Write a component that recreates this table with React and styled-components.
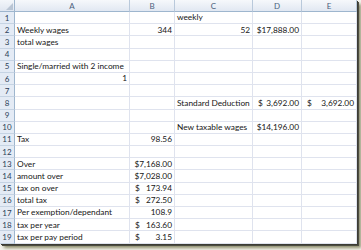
import styled, { createGlobalStyle } from "styled-components";

const GlobalStyle = createGlobalStyle`
  body {
    margin: 0;
    background: #f4f3ec;
    font-family: Lato, "Liberation Sans", sans-serif;
  }
`;

const COLS = ["A", "B", "C", "D", "E"];

const rows = {
  1: { C: { text: "weekly" } },
  2: {
    A: { text: "Weekly wages" },
    B: { text: "344", right: true },
    C: { text: "52", right: true },
    D: { text: "$17,888.00", right: true },
  },
  3: { A: { text: "total wages" } },
  5: { A: { text: "Single/married with 2 income" } },
  6: { A: { text: "1", right: true } },
  8: {
    C: { text: "Standard Deduction" },
    D: { money: "3,692.00" },
    E: { money: "3,692.00" },
  },
  10: {
    C: { text: "New taxable wages" },
    D: { text: "$14,196.00", right: true },
  },
  11: { A: { text: "Tax" }, B: { text: "98.56", right: true } },
  13: { A: { text: "Over" }, B: { text: "$7,168.00", right: true } },
  14: { A: { text: "amount over" }, B: { text: "$7,028.00", right: true } },
  15: { A: { text: "tax on over" }, B: { money: "173.94" } },
  16: { A: { text: "total tax" }, B: { money: "272.50" } },
  17: { A: { text: "Per exemption/dependant" }, B: { text: "108.9", right: true } },
  18: { A: { text: "tax per year" }, B: { money: "163.60" } },
  19: { A: { text: "tax per pay period" }, B: { money: "3.15" } },
};

const App = () => {
  const rowNums = Array.from({ length: 19 }, (_, i) => i + 1);
  return (
    <>
      <GlobalStyle />
      <Frame>
        <Sheet>
          <Corner>
            <CornerMark />
          </Corner>
          {COLS.map((c) => (
            <ColHeader key={c}>{c}</ColHeader>
          ))}
          {rowNums.map((n) => (
            <Row key={n} n={n} />
          ))}
        </Sheet>
      </Frame>
    </>
  );
};

const Row = ({ n }) => {
  const data = rows[n] || {};
  return (
    <>
      <RowHeader>{n}</RowHeader>
      {COLS.map((c) => {
        const cell = data[c];
        if (!cell) return <Cell key={c} />;
        if (cell.money)
          return (
            <Cell key={c} $money>
              <span>$</span>
              <span>{cell.money}</span>
            </Cell>
          );
        return (
          <Cell key={c} $right={cell.right}>
            {cell.text}
          </Cell>
        );
      })}
    </>
  );
};

export default App;

const Frame = styled.div`
  width: 361px;
  height: 250px;
  overflow: hidden;
`;

const Sheet = styled.div`
  display: grid;
  grid-template-columns: 15px 115px 45px 78px 49px 55px;
  grid-template-rows: 12px repeat(19, 12.2px);
  width: 357px;
  height: 244px;
  background: #fff;
  box-shadow: 1px 1px 0 #3c3c34, 2px 2px 0 #4d4d42, 4px 4px 3px #8d8d6c;
  font-size: 8.3px;
  color: #161616;
`;

const Corner = styled.div`
  position: relative;
  background: linear-gradient(#f3f6fa, #dfe6f0);
  border-right: 1px solid #9eb6ce;
  border-bottom: 1px solid #9eb6ce;
`;

const CornerMark = styled.div`
  position: absolute;
  right: 1px;
  bottom: 1px;
  width: 0;
  height: 0;
  border-left: 7px solid transparent;
  border-bottom: 7px solid #b9c5d4;
`;

const ColHeader = styled.div`
  display: flex;
  align-items: center;
  justify-content: center;
  background: linear-gradient(#f6f8fb, #e1e8f2);
  border-right: 1px solid #b9c9db;
  border-bottom: 1px solid #9eb6ce;
  color: #4a5f7c;
  font-size: 8px;
`;

const RowHeader = styled.div`
  display: flex;
  align-items: center;
  justify-content: center;
  background: #e4ebf5;
  border-right: 1px solid #9eb6ce;
  border-bottom: 1px solid #c5d3e3;
  color: #2d3f58;
  font-size: 8px;
`;

const Cell = styled.div`
  display: flex;
  align-items: center;
  justify-content: ${(p) =>
    p.$money ? "space-between" : p.$right ? "flex-end" : "flex-start"};
  padding: 0 2px 0 2px;
  border-right: 1px solid #dfe3ee;
  border-bottom: 1px solid #dfe3ee;
  white-space: nowrap;
  min-width: 0;
  line-height: 1;
  span:first-child {
    padding-left: ${(p) => (p.$money ? "3px" : "0")};
  }
`;
